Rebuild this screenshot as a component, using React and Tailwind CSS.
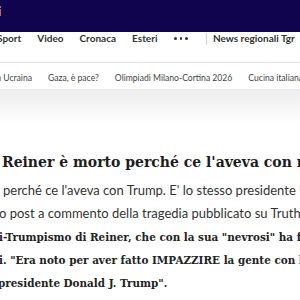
import React from 'react';

const navItems = ['Sport', 'Video', 'Cronaca', 'Esteri'];
const topics = ['Guerra in Ucraina', 'Gaza, è pace?', 'Olimpiadi Milano-Cortina 2026', 'Cucina italiana'];

const sans = { fontFamily: 'Lato, "Open Sans", sans-serif' };
const serif = { fontFamily: '"DejaVu Serif", "Liberation Serif", serif' };

export default function App() {
  return (
    <div className="w-[300px] h-[300px] overflow-hidden bg-white text-[#222]">
      {/* top brand bar */}
      <div className="h-[32px] bg-[#10044f] flex items-start">
        <span className="-ml-[2px] mt-[2px] text-[13px] font-bold text-[#cfc8e0]" style={sans}>i</span>
      </div>

      {/* main nav */}
      <div className="h-[31px] border-b border-[#e2e2e2] flex items-start whitespace-nowrap" style={sans}>
        <div className="flex items-center gap-[16px] -ml-[3px] text-[10px] leading-[13px] font-bold text-[#333]">
          {navItems.map((n) => (
            <span key={n}>{n}</span>
          ))}
          <span className="flex gap-[3px] pl-[1px] pr-[2px]">
            <span className="w-[2.5px] h-[2.5px] rounded-full bg-[#333]" />
            <span className="w-[2.5px] h-[2.5px] rounded-full bg-[#333]" />
            <span className="w-[2.5px] h-[2.5px] rounded-full bg-[#333]" />
          </span>
          <span className="w-px h-[12px] bg-[#d0d0d0]" />
          <span className="-ml-[10px]">News regionali Tgr</span>
        </div>
      </div>

      {/* topics */}
      <div className="h-[26px] pt-[4px] flex items-center whitespace-nowrap" style={sans}>
        <div className="flex gap-[16px] -ml-[34px] text-[8.6px] text-[#444]">
          {topics.map((t) => (
            <span key={t}>{t}</span>
          ))}
        </div>
      </div>

      {/* fading band */}
      <div className="h-[36px] bg-gradient-to-b from-[#ececec] via-[#f6f6f6] to-white" />

      {/* article */}
      <div className="pt-[27px] whitespace-nowrap">
        <h1 className="pl-[2px] text-[14px] font-bold leading-[20px] text-[#1d1d1d]" style={serif}>
          Reiner è morto perché ce l'aveva con me
        </h1>
        <div className="mt-[7px] text-[13px] leading-[23px] text-[#333]" style={sans}>
          <p className="pl-[3px]">perché ce l'aveva con Trump. E' lo stesso presidente Usa</p>
          <p className="-ml-[1px]">
            o post a commento della tragedia pubblicato su Truth.{' '}
            <b className="text-[10.4px] font-bold text-[#222]" style={serif}>Il</b>
          </p>
          <div className="text-[10.4px] font-bold text-[#222]" style={serif}>
            <p className="-ml-[1px]">i-Trumpismo di Reiner, che con la sua "nevrosi" ha fatto</p>
            <p className="-ml-[1px]">i. "Era noto per aver fatto IMPAZZIRE la gente con la</p>
            <p className="-ml-[2px]">presidente Donald J. Trump".</p>
          </div>
        </div>
      </div>
    </div>
  );
}
